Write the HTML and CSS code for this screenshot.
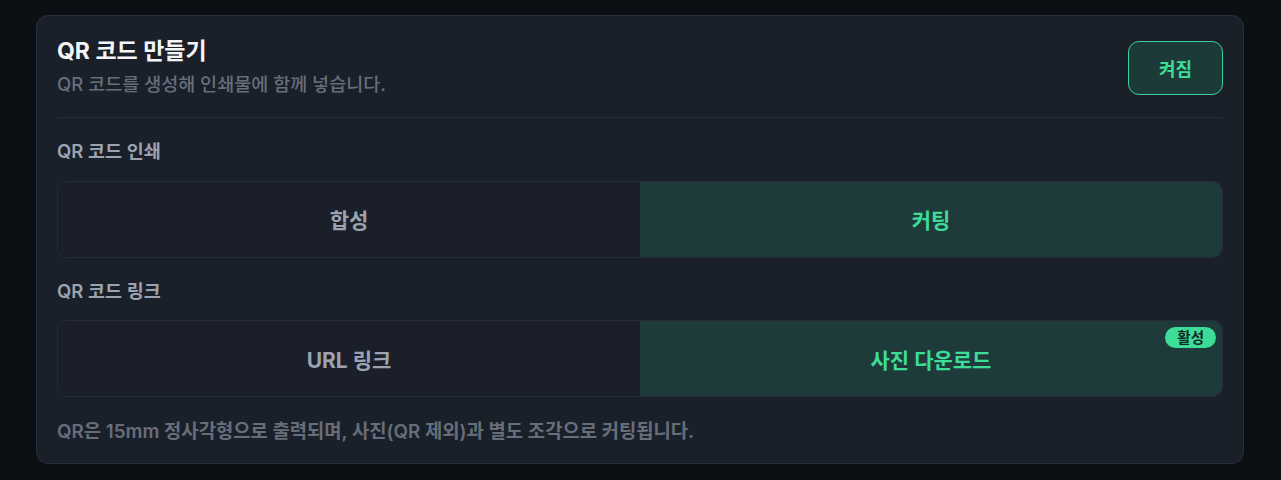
FILE: index.html
```html
<!DOCTYPE html>
<html lang="ko">
<head>
<meta charset="utf-8">
<link rel="stylesheet" href="styles.css">
</head>
<body>
<section class="card">
  <header class="head">
    <div class="head-text">
      <h1 class="title">QR 코드 만들기</h1>
      <p class="subtitle">QR 코드를 생성해 인쇄물에 함께 넣습니다.</p>
    </div>
    <button class="toggle">켜짐</button>
  </header>
  <div class="group">
    <div class="label">QR 코드 인쇄</div>
    <div class="seg">
      <div class="opt">합성</div>
      <div class="opt on">커팅</div>
    </div>
  </div>
  <div class="group">
    <div class="label">QR 코드 링크</div>
    <div class="seg">
      <div class="opt">URL 링크</div>
      <div class="opt on">사진 다운로드<span class="badge">활성</span></div>
    </div>
  </div>
  <p class="note">QR은 15mm 정사각형으로 출력되며, 사진(QR 제외)과 별도 조각으로 커팅됩니다.</p>
</section>
</body>
</html>
```
FILE: styles.css
```css
* { box-sizing: border-box; }
html, body { margin: 0; }
body {
  background: #0c0f14;
  font-family: Inter, "Noto Sans CJK KR", sans-serif;
  padding: 15px 37px 0 36px;
}
.card {
  background: #1a202a;
  border: 1px solid #2a303b;
  border-radius: 12px;
  padding: 20px 20px 20px 20px;
  height: 449px;
}
.head {
  display: flex;
  justify-content: space-between;
  align-items: center;
  padding-bottom: 21px;
  border-bottom: 1px solid #282e38;
}
.title {
  margin: 0;
  color: #f3f4f6;
  font-size: 23px;
  line-height: 30px;
  font-weight: 700;
}
.subtitle {
  margin: 6px 0 0;
  color: #676e7a;
  font-size: 18.5px;
  line-height: 24px;
  font-weight: 500;
}
.toggle {
  width: 95px;
  height: 54px;
  margin-top: 3px;
  border: 1.5px solid #3ecf98;
  background: #1c3a37;
  color: #3ddc97;
  border-radius: 11px;
  font-family: inherit;
  font-size: 18px;
  font-weight: 700;
}
.group { margin-top: 22px; }
.label {
  color: #9ca3af;
  font-size: 18.5px;
  line-height: 22px;
  font-weight: 600;
  margin-bottom: 18.5px;
}
.seg {
  display: grid;
  grid-template-columns: 1fr 1fr;
  height: 77px;
  border: 1px solid #272d37;
  border-radius: 10px;
  overflow: hidden;
}
.opt {
  position: relative;
  display: flex;
  align-items: center;
  justify-content: center;
  color: #9ca3af;
  font-size: 21px;
  font-weight: 700;
  background: #1a1f29;
}
.opt.on {
  background: #1e3a3b;
  color: #3ddc97;
}
.badge {
  position: absolute;
  top: 6px;
  right: 6px;
  background: #3ddc97;
  color: #0f2a22;
  font-size: 14.5px;
  line-height: 21px;
  padding: 0 12px;
  border-radius: 11px;
  font-weight: 700;
}
.note {
  margin: 23px 0 0;
  color: #676e7a;
  font-size: 18.8px;
  line-height: 24px;
  font-weight: 600;
}
```
